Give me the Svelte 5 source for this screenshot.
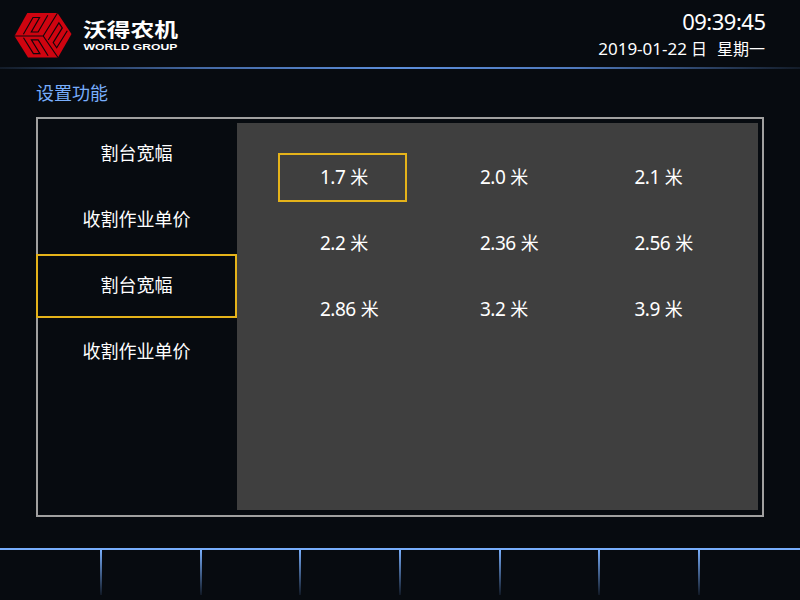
<script>
  const menu = ['割台宽幅', '收割作业单价', '割台宽幅', '收割作业单价'];
  const selectedMenu = 2;
  const widths = ['1.7', '2.0', '2.1', '2.2', '2.36', '2.56', '2.86', '3.2', '3.9'];
  const selectedWidth = 0;
  const keys = [1, 2, 3, 4, 5, 6, 7, 8];
</script>

<div class="screen">
  <header>
    <svg class="brand" width="190" height="60" viewBox="0 0 190 60">
      <path fill="#cf0410" d="M27.3 13H57.5L71.5 34L58 57.5H28L14.5 36Z" />
      <g fill="none" stroke="#12060b" stroke-width="1.15">
        <path d="M14.5 36H43.2L57.5 13M43.2 36L58 57.5" />
        <path d="M23.4 34.2L33 17.5H39.6L31.3 32H38.1L47.8 15.3" />
        <path d="M48.3 40L58.9 22.9L62.3 27.9L53.2 42.6L56.7 47.8L67.3 30.7" />
        <path d="M23.5 37.7L33.4 53.6H39.9L31.4 39.9H38.2L48.1 55.8" />
      </g>
      <text class="cn" x="83" y="36.6" textLength="95" lengthAdjust="spacingAndGlyphs">沃得农机</text>
      <text class="en" x="83.5" y="50" textLength="94" lengthAdjust="spacingAndGlyphs">WORLD GROUP</text>
    </svg>
    <div class="clock">
      <div class="time">09:39:45</div>
      <div class="date"><span class="day">2019-01-22</span><span>日</span><span class="week">星期一</span></div>
    </div>
  </header>
  <div class="rule"></div>
  <h1>设置功能</h1>
  <main>
    <nav>
      {#each menu as item, i}
        <div class="item" class:selected={i === selectedMenu}>{item}</div>
      {/each}
    </nav>
    <section>
      {#each widths as width, i}
        <div class="option" class:selected={i === selectedWidth}><span class="num">{width}</span><span>米</span></div>
      {/each}
    </section>
  </main>
  <footer>
    {#each keys as key (key)}
      <div class="key"></div>
    {/each}
  </footer>
</div>

<style>
  :global(body) { margin: 0; background: #070b10; }
  .screen {
    box-sizing: border-box;
    width: 800px;
    height: 600px;
    overflow: hidden;
    display: flex;
    flex-direction: column;
    background: #070b10;
    color: #fff;
    font: 18px/24px "Noto Sans", "Noto Sans CJK SC", sans-serif;
  }
  header { height: 67px; display: flex; justify-content: space-between; flex: none; }
  .brand { display: block; }
  .cn { font: 700 19px "Noto Sans CJK SC", sans-serif; fill: #fff; }
  .en { font: 700 9.4px "Liberation Sans", sans-serif; fill: #fff; }
  .clock { padding: 7px 35px 0 0; text-align: right; }
  .time { font-size: 22px; line-height: 28px; letter-spacing: -0.5px; margin-right: -0.5px; }
  .date { display: flex; justify-content: flex-end; font-size: 16px; line-height: 28px; }
  .date .day { font-size: 17px; margin-right: 4px; }
  .date .week { margin-left: 10px; }
  .rule {
    height: 2px;
    flex: none;
    background: linear-gradient(90deg, #131c28, #4469a4 25%, #5c8eda 50%, #4f79bc 72%, #131c28);
  }
  h1 { margin: 12px 0 0 36px; font-size: 18px; line-height: 24px; font-weight: 400; color: #78aefc; }
  main {
    box-sizing: border-box;
    width: 728px;
    height: 400px;
    margin: 12px 0 0 36px;
    padding: 4px 4px 5px 0;
    border: 2px solid #a0a0a0;
    display: flex;
    flex: none;
  }
  nav { width: 201px; margin-left: -2px; display: flex; flex-direction: column; gap: 2px; flex: none; margin-top: -1px; }
  .item {
    box-sizing: border-box;
    height: 64px;
    border: 2px solid transparent;
    padding-bottom: 2px;
    display: flex;
    align-items: center;
    justify-content: center;
    flex: none;
  }
  section {
    flex: 1;
    box-sizing: border-box;
    padding: 30px 0 0 41px;
    background: #3f3f3f;
    display: grid;
    grid-template-columns: 160px 154.5px 129px;
    grid-auto-rows: 49px;
    row-gap: 17px;
    align-content: start;
  }
  .option {
    box-sizing: border-box;
    width: 129px;
    padding: 0 0 2px 40px;
    border: 2px solid transparent;
    display: flex;
    align-items: baseline;
    line-height: 45px;
  }
  .num { font-size: 19px; letter-spacing: -0.5px; margin-right: 5px; }
  .selected { border-color: #e5b31a; }
  footer { margin-top: 31px; height: 52px; flex: none; border-top: 2px solid #78aefc; box-sizing: border-box; display: flex; }
  .key {
    box-sizing: border-box;
    flex: 0 0 99.7px;
    height: 45px;
    background: linear-gradient(#78aefc, #101824) right top / 2px 100% no-repeat;
  }
  .key:first-child { flex-basis: 102px; }
  .key:last-child { background: none; }
</style>
